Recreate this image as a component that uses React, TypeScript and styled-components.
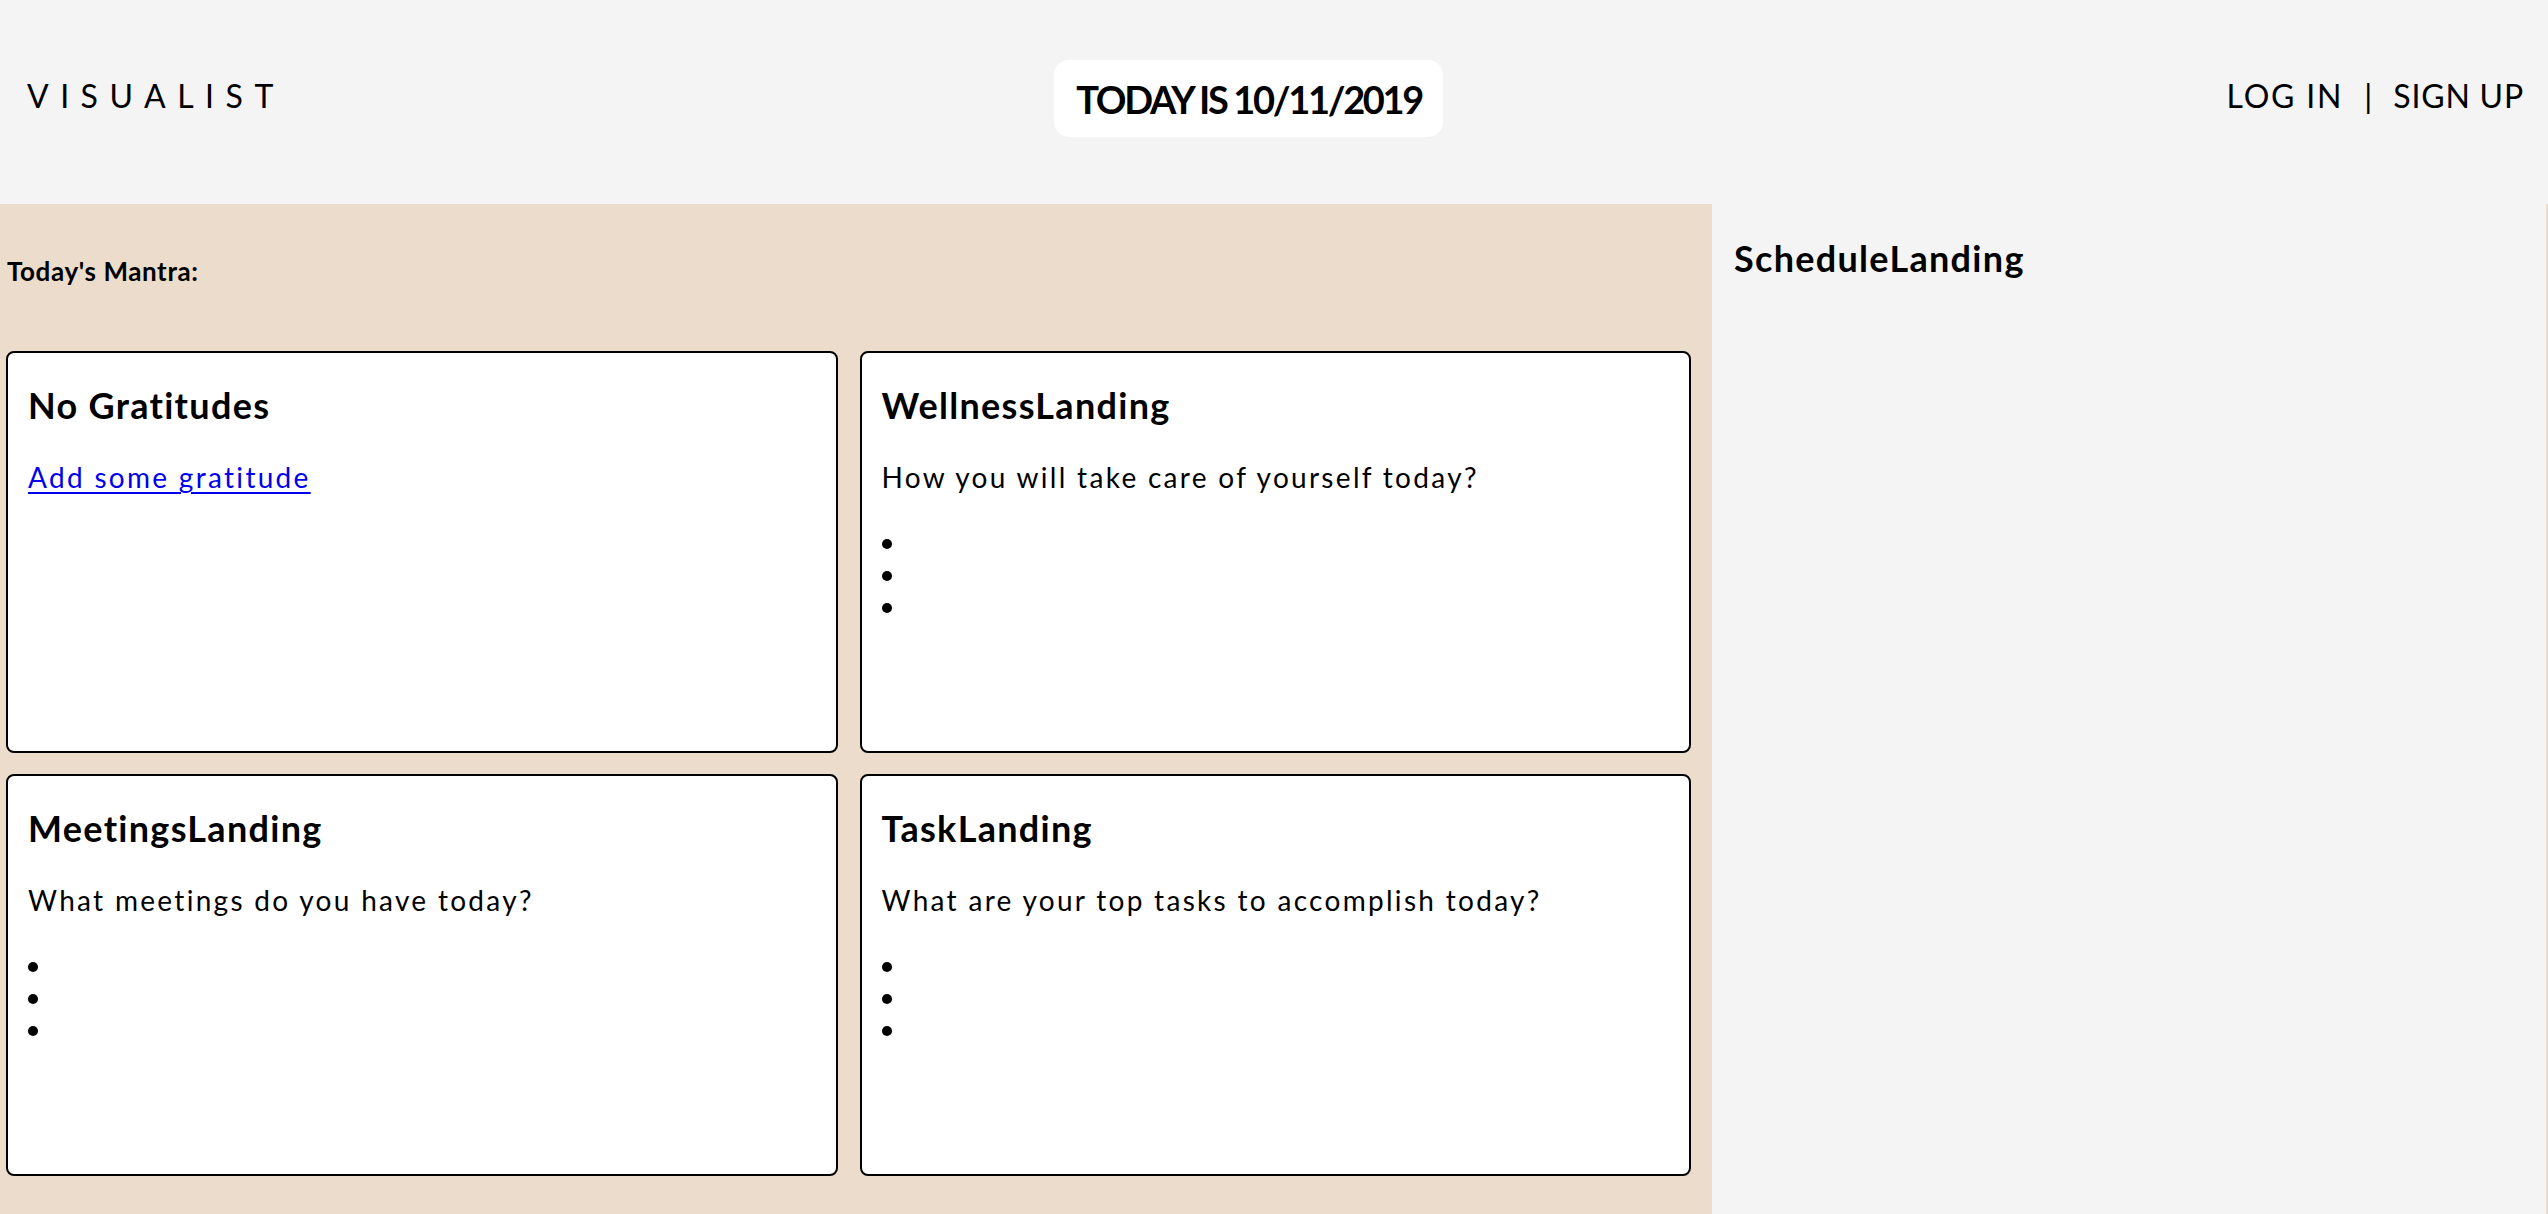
import React from "react";
import styled, { createGlobalStyle } from "styled-components";

const GlobalStyle = createGlobalStyle`
  html, body {
    margin: 0;
    padding: 0;
    background: #f4f4f4;
    font-family: Lato, "Open Sans", "Noto Sans", sans-serif;
    color: #000;
  }
  * { box-sizing: border-box; }
`;

const Header = styled.header`
  height: 204px;
  display: flex;
  align-items: center;
  justify-content: space-between;
  padding: 0 24px 12px 27px;
  background: #f4f4f4;
`;

const Logo = styled.div`
  font-size: 32px;
  font-weight: 400;
  letter-spacing: 11.5px;
  line-height: 1.2;
`;

const DateBox = styled.div`
  display: flex;
  align-items: center;
  height: 77px;
  padding: 0 21px 0 22px;
  background: #ffffff;
  border-radius: 15px;
  font-size: 38px;
  font-weight: 700;
  letter-spacing: -2.3px;
  margin: 5px 14px 0 0;
`;

const Nav = styled.nav`
  display: flex;
  align-items: center;
  gap: 21px;
  font-size: 32px;
  line-height: 1.2;
`;

const NavLink = styled.span<{ $spacing: number }>`
  font-weight: 400;
  letter-spacing: ${(p) => p.$spacing}px;
`;

const Main = styled.main`
  display: flex;
  min-height: 1010px;
  background: #ebdccb;
  padding-right: 2px;
`;

const LeftPanel = styled.section`
  flex: 0 0 1712px;
  padding: 52px 21px 37px 6px;
`;

const Mantra = styled.div`
  font-size: 26px;
  font-weight: 700;
  line-height: 1.2;
  padding-left: 1px;
  margin-bottom: 64px;
  letter-spacing: 0.6px;
`;

const Grid = styled.div`
  display: grid;
  grid-template-columns: 1fr 1fr;
  grid-auto-rows: 402px;
  column-gap: 22px;
  row-gap: 21px;
`;

const Card = styled.div`
  background: #ffffff;
  border: 2px solid #000;
  border-radius: 8px;
  padding: 20px;
`;

const RightPanel = styled.section`
  flex: 1;
  background: #f4f4f4;
  padding: 22px;
`;

const Title = styled.h2`
  margin: 10px 0 0;
  font-size: 36px;
  font-weight: 700;
  line-height: 44px;
  letter-spacing: 1.3px;
`;

const Prompt = styled.p`
  margin: 34px 0 0;
  font-size: 28px;
  font-weight: 400;
  line-height: 32px;
  letter-spacing: 2.3px;
`;

const AddLink = styled.a`
  color: #0000ee;
  text-decoration: underline;
  text-underline-offset: 4px;
  text-decoration-thickness: 2px;
`;

const List = styled.ul`
  margin: 33px 0 0;
  padding: 0;
  list-style: disc inside;
  font-size: 29px;
  line-height: 32px;
`;

const Item = styled.li`
  height: 32px;
`;

const EmptyList = () => (
  <List>
    <Item />
    <Item />
    <Item />
  </List>
);

export default function App() {
  return (
    <>
      <GlobalStyle />
      <Header>
        <Logo>VISUALIST</Logo>
        <DateBox>TODAY IS 10/11/2019</DateBox>
        <Nav>
          <NavLink $spacing={1.8}>LOG IN</NavLink>
          <NavLink $spacing={0}>|</NavLink>
          <NavLink $spacing={0.8}>SIGN UP</NavLink>
        </Nav>
      </Header>
      <Main>
        <LeftPanel>
          <Mantra>Today's Mantra:</Mantra>
          <Grid>
            <Card>
              <Title>No Gratitudes</Title>
              <Prompt>
                <AddLink href="#">Add some gratitude</AddLink>
              </Prompt>
            </Card>
            <Card>
              <Title>WellnessLanding</Title>
              <Prompt>How you will take care of yourself today?</Prompt>
              <EmptyList />
            </Card>
            <Card>
              <Title>MeetingsLanding</Title>
              <Prompt>What meetings do you have today?</Prompt>
              <EmptyList />
            </Card>
            <Card>
              <Title>TaskLanding</Title>
              <Prompt>What are your top tasks to accomplish today?</Prompt>
              <EmptyList />
            </Card>
          </Grid>
        </LeftPanel>
        <RightPanel>
          <Title>ScheduleLanding</Title>
        </RightPanel>
      </Main>
    </>
  );
}
